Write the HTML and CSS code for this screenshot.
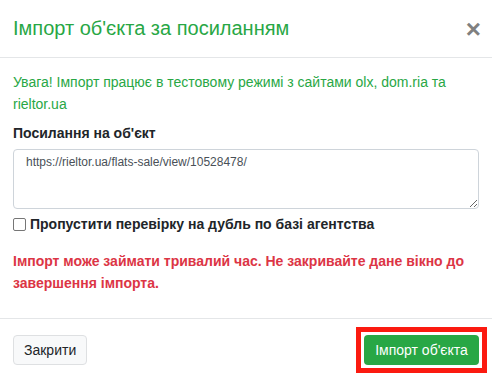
FILE: index.html
```html
<!DOCTYPE html>
<html>
<head>
    <title>Імпорт об'єкта</title>
    <meta charset="utf-8">
    <link rel="stylesheet" href="styles.css">
</head>
<body>
<div class="modal">
    <div class="modal-header">
        <h5 class="modal-title">Імпорт об'єкта за посиланням</h5>
        <span class="close">&times;</span>
    </div>
    <div class="modal-body">
        <p class="text-success">Увага! Імпорт працює в тестовому режимі з сайтами olx, dom.ria та rieltor.ua</p>
        <label class="field-label" for="url">Посилання на об'єкт</label>
        <textarea id="url" class="form-control">https://rieltor.ua/flats-sale/view/10528478/</textarea>
        <label class="check-row">
            <span class="check-box"></span>
            Пропустити перевірку на дубль по базі агентства
        </label>
        <p class="text-danger">Імпорт може займати тривалий час. Не закривайте дане вікно до завершення імпорта.</p>
    </div>
    <div class="modal-footer">
        <a class="btn btn-light">Закрити</a>
        <span class="marked"><a class="btn btn-success">Імпорт об'єкта</a></span>
    </div>
</div>
</body>
</html>
```

FILE: styles.css
```css
body {
    margin: 0;
    font-family: "Liberation Sans", Arial, sans-serif;
    font-size: 14px;
    color: #212529;
    background: #fff;
}

.modal {
    width: 492px;
    height: 379px;
    overflow: hidden;
}

.modal-header {
    display: flex;
    justify-content: space-between;
    align-items: center;
    height: 57px;
    padding: 0 13px;
    border-bottom: 1px solid #e4e6e8;
}

.modal-title {
    margin: 0;
    font-size: 20px;
    font-weight: normal;
    color: #28a745;
}

.close {
    font-size: 26px;
    font-weight: bold;
    color: #808080;
    line-height: 1;
    margin-right: -2px;
}

.modal-body {
    padding: 13px 13px 0;
    height: 247px;
}

.text-success {
    margin: 0 0 8px;
    color: #28a745;
    line-height: 22px;
}

.field-label {
    display: block;
    font-weight: bold;
    margin-bottom: 6px;
    line-height: 20px;
}

.form-control {
    display: block;
    box-sizing: border-box;
    width: 100%;
    height: 60px;
    padding: 5px 12px;
    border: 1px solid #ced4da;
    border-radius: 4px;
    font-family: "Liberation Sans", Arial, sans-serif;
    font-size: 12px;
    color: #495057;
    resize: vertical;
}

.check-row {
    display: flex;
    align-items: center;
    gap: 4px;
    margin-top: 5px;
    font-weight: bold;
    font-size: 14px;
    line-height: 20px;
}

.check-box {
    width: 11px;
    height: 11px;
    border: 1px solid #767676;
    border-radius: 2px;
    background: #fff;
}

.text-danger {
    margin: 16px 0 0;
    color: #dc3545;
    font-weight: bold;
    line-height: 22px;
}

.modal-footer {
    display: flex;
    justify-content: space-between;
    align-items: center;
    padding: 8px 5px 0 13px;
    border-top: 1px solid #e4e6e8;
}

.btn {
    display: inline-block;
    height: 30px;
    line-height: 30px;
    padding: 0 10px;
    border-radius: 4px;
    font-size: 14px;
    box-sizing: border-box;
}

.btn-light {
    background: #f8f9fa;
    border: 1px solid #dee0e2;
    line-height: 28px;
    color: #212529;
}

.btn-success {
    background: #28a745;
    color: #fff;
    width: 115px;
    text-align: center;
    vertical-align: top;
}

.marked {
    display: inline-block;
    padding: 3px;
    border: 5px solid #fb1a10;
}
```
